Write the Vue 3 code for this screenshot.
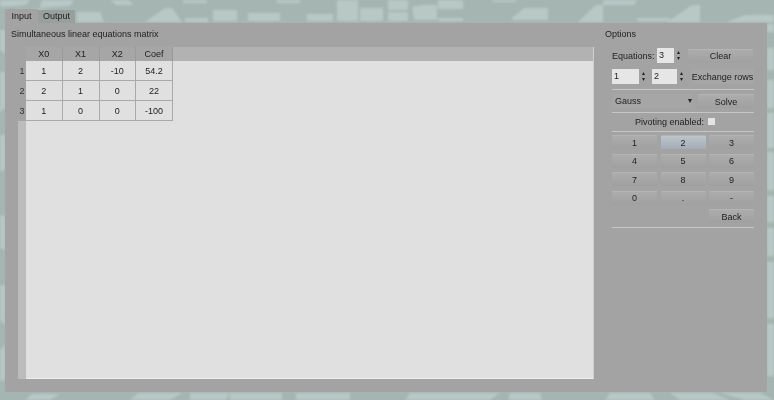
<script setup>
const columns = ['X0', 'X1', 'X2', 'Coef']
const rows = [
  ['1', '2', '-10', '54.2'],
  ['2', '1', '0', '22'],
  ['1', '0', '0', '-100'],
]
const keys = ['1', '2', '3', '4', '5', '6', '7', '8', '9', '0', '.', '-']
const patches = [
  '0,0 30,0 26,5 0,7', '42,0 74,0 70,6 40,8', '8,12 40,9 60,16 60,23 12,23',
  '77,12 100,12 104,22 77,22', '110,0 128,0 134,5 116,5', '183,0 207,0 207,3 183,3',
  '145,22 165,8 172,8 182,22', '185,18 208,18 208,22 185,22', '213,10 237,10 237,21 213,21',
  '248,13 280,13 280,21 248,21', '277,0 300,0 300,3 277,3',
  '307,14 333,14 333,21 307,21', '337,0 358,0 358,21 337,21', '360,8 383,8 383,21 360,21',
  '388,0 408,0 408,10 388,10', '388,12 408,12 408,21 388,21', '412,7 422,5 437,5 437,20 414,20',
  '438,0 463,0 463,9 438,9', '438,18 463,18 463,21 438,21', '492,0 517,0 516,2 492,2',
  '512,18 524,8 540,8 548,8 548,20 512,20', '578,22 596,5 603,5 603,22',
  '603,0 637,0 634,5 603,5', '667,22 692,5 700,5 700,22', '727,22 745,15 774,15 774,22',
  '637,18 670,18 670,21 637,21',
]
const strips = [
  '0,30 5,30 5,54 0,50', '0,72 5,72 5,108 0,112', '0,135 5,135 5,170 0,172',
  '0,215 5,216 5,250 0,248', '0,285 5,285 5,325 0,320', '0,350 5,345 5,380 0,382',
  '767,24 774,24 774,32 767,32', '767,48 774,48 774,70 767,70', '767,80 774,80 774,108 767,108',
  '767,113 774,113 774,148 767,148', '767,152 774,152 774,190 767,190', '767,196 774,196 774,222 767,222',
  '767,228 774,228 774,256 767,256', '767,262 774,262 774,318 767,318', '767,324 774,324 774,376 767,376',
  '25,400 32,394 60,394 50,400', '130,400 138,393 182,393 170,400', '190,393 230,393 226,400 190,400',
  '230,393 282,393 282,400 230,400', '296,393 350,393 350,400 296,400', '410,393 450,393 445,400 405,400',
  '436,400 445,393 500,393 490,400', '510,393 540,393 542,400 508,400', '610,393 650,393 655,400 605,400',
  '670,393 712,393 730,400 680,400', '720,393 760,393 774,400 745,400',
]
</script>

<template>
  <div class="screen">
    <svg class="backdrop" viewBox="0 0 774 400" aria-hidden="true">
      <rect width="774" height="400" fill="#a4b5b2" />
      <polygon v-for="p in patches" :key="p" :points="p" fill="#b7c8c5" />
      <polygon v-for="p in strips" :key="p" :points="p" fill="#b7c8c5" />
    </svg>

    <div class="window">
      <div class="tabs">
        <div class="tab active">Input</div>
        <div class="tab">Output</div>
      </div>

      <div class="panel">
        <section class="matrix">
          <div class="title">Simultaneous linear equations matrix</div>
          <div class="table-wrap">
            <div class="gutter">
              <div class="gutter-head"></div>
              <div v-for="n in 3" :key="n" class="row-no">{{ n }}</div>
              <div class="gutter-rest"></div>
            </div>
            <div class="sheet">
              <div class="head">
                <div v-for="c in columns" :key="c" class="head-cell">{{ c }}</div>
              </div>
              <div v-for="(row, i) in rows" :key="i" class="row">
                <div v-for="(cell, j) in row" :key="j" class="cell">{{ cell }}</div>
              </div>
            </div>
          </div>
        </section>

        <aside class="options">
          <div class="title">Options</div>
          <div class="line first">
            <span class="eq-label">Equations:</span>
            <span class="spin eq-spin"><span class="spin-value">3</span><span class="arrows">▴<br />▾</span></span>
            <button class="btn clear">Clear</button>
          </div>
          <div class="line second">
            <span class="spin a-spin"><span class="spin-value">1</span><span class="arrows">▴<br />▾</span></span>
            <span class="spin b-spin"><span class="spin-value">2</span><span class="arrows">▴<br />▾</span></span>
            <button class="btn exchange">Exchange rows</button>
          </div>
          <div class="sep"></div>
          <div class="line third">
            <div class="combo"><span>Gauss</span><span class="combo-arrow">▾</span></div>
            <button class="btn solve">Solve</button>
          </div>
          <div class="sep"></div>
          <div class="pivot">
            <span>Pivoting enabled:</span>
            <span class="check"></span>
          </div>
          <div class="sep"></div>
          <div class="keypad">
            <button v-for="k in keys" :key="k" class="btn key" :class="{ hot: k === '2' }">{{ k }}</button>
            <button class="btn key back">Back</button>
          </div>
          <div class="sep last"></div>
        </aside>
      </div>
    </div>
  </div>
</template>

<style>
html, body { margin: 0; background: #a4b5b2; }
</style>

<style scoped>
.screen {
  position: relative;
  width: 774px;
  height: 400px;
  overflow: hidden;
  font-family: "Liberation Sans", Arial, sans-serif;
  font-size: 9px;
  color: #222222;
}
.backdrop { position: absolute; inset: 0; width: 774px; height: 400px; filter: blur(1px); }
.window {
  position: relative;
  box-sizing: border-box;
  width: 774px;
  height: 400px;
  padding: 9px 7px 8px 5px;
  display: flex;
  flex-direction: column;
  filter: blur(.3px);
}
.tabs { display: flex; height: 14px; }
.tab { height: 14px; line-height: 14px; text-align: center; }
.tab:nth-child(1) { width: 33px; background: #a3a3a3; color: #1c1c1c; }
.tab:nth-child(2) { width: 37px; margin-top: 1px; height: 13px; line-height: 12px; background: #98a09e; }
.panel { flex: 1; display: flex; background: #a3a3a3; }
.matrix { width: 600px; display: flex; flex-direction: column; padding: 6px 11px 13px 6px; box-sizing: border-box; }
.title { height: 13px; line-height: 11px; }
.table-wrap { margin-top: 5px; flex: 1; display: flex; margin-left: 7px; }
.gutter { width: 8px; flex: none; display: flex; flex-direction: column; }
.gutter-head { height: 14px; }
.gutter-rest { flex: 1; background: #bcbcbc; }
.row-no { height: 20px; line-height: 20px; text-align: center; color: #333; flex: none; }
.sheet { flex: 1; background: #e0e0e0; display: flex; flex-direction: column; border-bottom: 1px solid #eeeeee; border-right: 1px solid #cfcfcf; }
.head { height: 14px; display: flex; background: #b2b2b2; }
.head-cell { width: 36.75px; line-height: 14px; text-align: center; border-right: 1px solid #9a9a9a; box-sizing: border-box; background: #a6a6a6; }
.row { display: flex; height: 20px; }
.cell {
  width: 36.75px;
  box-sizing: border-box;
  line-height: 21px;
  text-align: center;
  border-right: 1px solid #a9a9a9;
  border-bottom: 1px solid #a9a9a9;
  background: #e0e0e0;
}
.options { width: 162px; padding: 6px 0 0 0; box-sizing: border-box; }
.line { display: flex; align-items: center; margin-left: 7px; width: 142px; }
.first { margin-top: 6px; height: 15px; }
.second { margin-top: 6px; height: 15px; }
.third { height: 14px; justify-content: space-between; margin-top: 4px; }
.eq-label { width: 45px; flex: none; }
.spin { display: flex; height: 15px; align-items: stretch; flex: none; }
.spin-value { flex: 1; background: #e6e6e6; line-height: 15px; padding-left: 2px; }
.arrows { width: 8px; font-size: 6px; line-height: 6px; text-align: center; color: #222; padding-top: 1px; }
.eq-spin { width: 25px; }
.a-spin { width: 35px; margin-right: 5px; }
.b-spin { width: 33px; margin-right: 6px; }
.btn {
  font: inherit;
  color: inherit;
  padding: 0;
  border: 0;
  background: linear-gradient(#acacac, #a0a0a0);
  border-top: 1px solid #b4b4b4;
  border-radius: 1px;
}
.clear { width: 65px; height: 14px; margin-left: 6px; line-height: 12px; }
.exchange { width: 63px; height: 15px; white-space: nowrap; background: #a6a6a6; border-top: 0; }
.sep { height: 1px; background: #c6c6c6; margin: 5px 0 0 7px; width: 142px; }
.third + .sep { margin-top: 4px; }
.combo { width: 80px; height: 14px; line-height: 14px; display: flex; justify-content: space-between; padding: 0 0 0 3px; box-sizing: border-box; background: #a6a6a6; }
.combo-arrow { font-size: 8px; }
.solve { width: 56px; height: 14px; }
.pivot { display: flex; align-items: center; height: 13px; margin-top: 2px; margin-left: 30px; gap: 4px; }
.pivot + .sep { margin-top: 3px; }
.check { width: 7px; height: 7px; background: #e4e4e4; }
.keypad {
  margin: 3px 0 0 7px;
  width: 142px;
  display: grid;
  grid-template-columns: repeat(3, 45px);
  column-gap: 3.5px;
  grid-auto-rows: 14px;
  row-gap: 4.5px;
}
.key { height: 14px; line-height: 12px; }
.hot { background: linear-gradient(#bcc5cc, #a4adb6); }
.back { grid-column: 3; }
.sep.last { margin-top: 4px; }
</style>
